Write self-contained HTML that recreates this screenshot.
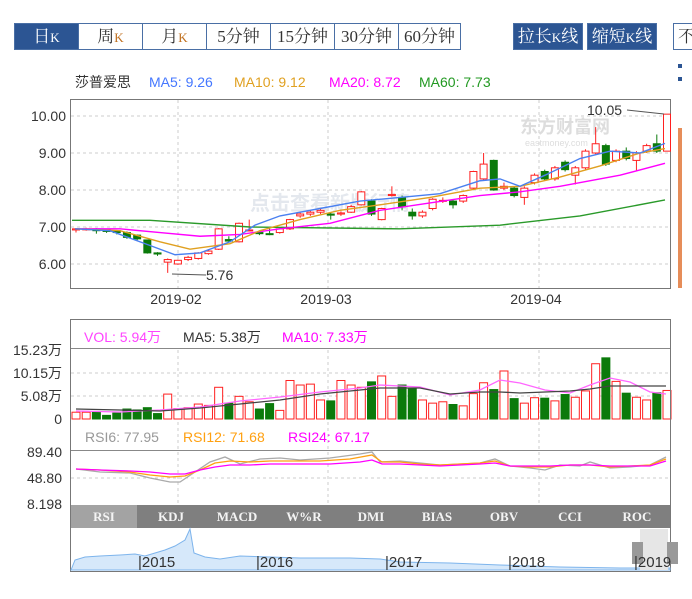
<!DOCTYPE html>
<html><head><meta charset="utf-8">
<style>
body{margin:0;width:692px;height:599px;background:#fff;overflow:hidden;position:relative;font-family:"Liberation Sans","Noto Sans CJK SC",sans-serif}
.btn{position:absolute;top:23px;height:27px;border:1px solid #4a6fa5;box-sizing:border-box;background:#fff;color:#333;font-size:17px;line-height:25px;text-align:center;font-family:"Liberation Serif","Noto Serif CJK SC",serif}
.btn.on{background:#2c5593;color:#fff}
.k{font-size:13px;color:#c07020}
.on .k{color:#fff}
svg{position:absolute;left:0;top:0}
</style></head><body>
<div class="btn on" style="left:14px;width:65px">日<span class="k">K</span></div>
<div class="btn" style="left:78px;width:65px">周<span class="k">K</span></div>
<div class="btn" style="left:142px;width:65px">月<span class="k">K</span></div>
<div class="btn" style="left:206px;width:65px">5分钟</div>
<div class="btn" style="left:270px;width:65px">15分钟</div>
<div class="btn" style="left:334px;width:65px">30分钟</div>
<div class="btn" style="left:398px;width:63px">60分钟</div>
<div class="btn on" style="left:513px;width:70px">拉长<span class="k">K</span>线</div>
<div class="btn on" style="left:587px;width:70px">缩短<span class="k">K</span>线</div>
<div class="btn" style="left:673px;width:40px;text-align:left;padding-left:4px">不</div>
<svg id="s" width="692" height="599" font-family="Liberation Sans, Noto Sans CJK SC, sans-serif">
<rect x="678" y="64" width="4" height="4" fill="#2c5593"/><rect x="678" y="77" width="4" height="4" fill="#2c5593"/>
<rect x="678" y="128" width="4" height="160" fill="#e07030" opacity="0.8"/>
<text x="75" y="87" font-size="14" fill="#333">莎普爱思</text>
<text x="149" y="87" font-size="14" fill="#4477ff">MA5: 9.26</text>
<text x="234" y="87" font-size="14" fill="#e0a020">MA10: 9.12</text>
<text x="329" y="87" font-size="14" fill="#ff00ff">MA20: 8.72</text>
<text x="419" y="87" font-size="14" fill="#229922">MA60: 7.73</text>
<rect x="70.5" y="99.5" width="600" height="189" fill="none" stroke="#777"/>
<g stroke="#ccc" stroke-dasharray="3,3">
<line x1="71" x2="670" y1="116" y2="116"/><line x1="71" x2="670" y1="153" y2="153"/><line x1="71" x2="670" y1="190" y2="190"/><line x1="71" x2="670" y1="227" y2="227"/><line x1="71" x2="670" y1="264" y2="264"/>
<line x1="178" x2="178" y1="100" y2="288"/><line x1="328" x2="328" y1="100" y2="288"/><line x1="539" x2="539" y1="100" y2="288"/>
<line x1="178" x2="178" y1="350" y2="504"/><line x1="328" x2="328" y1="350" y2="504"/><line x1="539" x2="539" y1="350" y2="504"/>
<line x1="71" x2="670" y1="373" y2="373"/><line x1="71" x2="670" y1="396" y2="396"/><line x1="71" x2="670" y1="478" y2="478"/>
</g>
<g font-size="14" fill="#333" text-anchor="end">
<text x="66" y="121">10.00</text><text x="66" y="158">9.00</text><text x="66" y="195">8.00</text><text x="66" y="232">7.00</text><text x="66" y="269">6.00</text>
</g>
<g font-size="14" fill="#333" text-anchor="middle"><text x="176" y="304">2019-02</text><text x="326" y="304">2019-03</text><text x="536" y="304">2019-04</text></g>
<text x="520" y="133" font-size="18" fill="#ddd" font-weight="bold">东方财富网</text>
<text x="525" y="146" font-size="9" fill="#ddd">eastmoney.com</text>
<text x="250" y="210" font-size="20" fill="#e4e8ee" font-weight="bold">点击查看新版行情</text>
<g id="cd"></g>
<text x="587" y="115" font-size="14" fill="#333">10.05</text>
<line x1="627" y1="110" x2="664" y2="114" stroke="#555"/>
<text x="206" y="280" font-size="14" fill="#333">5.76</text>
<line x1="172" y1="274" x2="206" y2="275" stroke="#555"/>
<rect x="70.5" y="319.5" width="600" height="252" fill="none" stroke="#777"/>
<line x1="71" x2="670" y1="348.5" y2="348.5" stroke="#888"/>
<line x1="71" x2="670" y1="450.5" y2="450.5" stroke="#888"/>
<text x="84" y="342" font-size="14" fill="#ff44ff">VOL: 5.94万</text>
<text x="183" y="342" font-size="14" fill="#333">MA5: 5.38万</text>
<text x="282" y="342" font-size="14" fill="#ff00ff">MA10: 7.33万</text>
<g font-size="14" fill="#333" text-anchor="end">
<text x="62" y="355">15.23万</text><text x="62" y="378">10.15万</text><text x="62" y="401">5.08万</text><text x="62" y="424">0</text>
<text x="62" y="457">89.40</text><text x="62" y="483">48.80</text><text x="62" y="509">8.198</text>
</g>
<text x="85" y="442" font-size="14" fill="#999">RSI6: 77.95</text>
<text x="183" y="442" font-size="14" fill="#ffa010">RSI12: 71.68</text>
<text x="288" y="442" font-size="14" fill="#ff00ff">RSI24: 67.17</text>
<polyline fill="none" stroke="#aaa" stroke-width="1.3" points="76,469 100,472 130,473 150,478 170,482 180,482 195,472 210,462 225,457 240,464 260,459 280,458 300,460 330,458 360,454 372,452 380,462 400,461 420,463 440,465 460,464 480,463 495,459 510,466 530,468 545,470 560,465 580,466 590,462 610,468 630,467 650,465 666,457"/>
<polyline fill="none" stroke="#ffa010" stroke-width="1.3" points="76,469 100,470 130,472 150,475 170,477 185,476 200,470 215,463 230,461 250,462 270,461 290,461 320,461 350,459 372,455 382,462 400,462 420,464 440,465 460,464 480,463 495,461 510,466 530,467 550,467 570,465 590,465 610,467 630,466 650,465 666,459"/>
<polyline fill="none" stroke="#ff00ff" stroke-width="1.3" points="76,469 100,470 130,471 150,472 170,474 185,474 200,470 215,467 230,465 250,465 270,464 300,464 330,464 360,462 372,460 382,464 400,464 420,465 440,466 460,465 480,464 495,463 510,466 530,466 550,466 570,465 590,465 610,466 630,466 650,466 666,461"/>
<rect x="71" y="505" width="599" height="23" fill="#7f7f7f"/>
<rect x="71" y="505" width="66" height="23" fill="#a3a3a3"/>
<g font-size="13" fill="#f4f4f4" text-anchor="middle" font-family="Liberation Serif, serif" font-weight="bold"><text x="104" y="521">RSI</text><text x="171" y="521">KDJ</text><text x="237" y="521">MACD</text><text x="304" y="521">W%R</text><text x="371" y="521">DMI</text><text x="437" y="521">BIAS</text><text x="504" y="521">OBV</text><text x="570" y="521">CCI</text><text x="637" y="521">ROC</text></g>
<path d="M71,570 L75,560 L85,557 L100,556 L120,555 L135,554 L145,556 L155,553 L165,550 L175,546 L185,540 L190,529 L194,553 L205,557 L220,559 L240,556 L270,557 L300,558 L350,558 L380,559 L400,562 L450,563 L500,565 L560,567 L620,568 L670,568 L670,570 Z" fill="#d6e8fa" stroke="#7db4ec" stroke-width="1"/>
<rect x="640" y="529" width="28" height="41" fill="#e6e6e6"/>
<rect x="632" y="542" width="11" height="22" fill="#999"/><rect x="667" y="542" width="11" height="22" fill="#999"/>
<g font-size="15" fill="#333"><text x="138" y="567">|2015</text><text x="256" y="567">|2016</text><text x="385" y="567">|2017</text><text x="508" y="567">|2018</text><text x="634" y="567">|2019</text></g>
</svg>
<script>
var D=[[6.92,6.95,6.97,6.85],[6.93,6.95,6.98,6.9],[6.95,6.9,6.97,6.82],[6.92,6.88,6.95,6.84],[6.9,6.85,6.92,6.8],[6.85,6.72,6.88,6.68],[6.78,6.68,6.8,6.62],[6.65,6.3,6.66,6.28],[6.3,6.27,6.32,6.22],[6.05,6.12,6.15,5.76],[6.0,6.1,6.12,5.98],[6.12,6.18,6.22,6.08],[6.15,6.3,6.32,6.12],[6.28,6.35,6.4,6.25],[6.4,6.95,6.97,6.38],[6.66,6.62,6.75,6.6],[6.6,7.1,7.12,6.58],[6.9,6.92,7.2,6.88],[6.85,6.82,6.9,6.78],[6.82,6.8,7.0,6.78],[6.85,6.95,6.98,6.82],[6.95,7.2,7.22,6.92],[7.3,7.35,7.4,7.25],[7.35,7.4,7.45,7.3],[7.4,7.45,7.5,7.35],[7.35,7.32,7.4,7.2],[7.35,7.38,7.42,7.3],[7.4,7.55,7.6,7.38],[7.6,7.95,7.97,7.58],[7.7,7.35,7.75,7.3],[7.2,7.5,7.52,7.18],[7.85,7.88,8.1,7.82],[7.8,7.55,7.85,7.45],[7.4,7.3,7.5,7.2],[7.3,7.4,7.45,7.25],[7.5,7.75,7.78,7.45],[7.7,7.72,7.8,7.65],[7.7,7.6,7.75,7.5],[7.7,7.85,7.88,7.65],[8.05,8.5,8.52,8.0],[8.3,8.7,9.0,8.25],[8.8,8.0,8.82,7.98],[8.05,8.1,8.2,8.0],[8.05,7.85,8.1,7.8],[7.8,8.05,8.1,7.6],[8.2,8.4,8.45,8.15],[8.5,8.3,8.55,8.25],[8.3,8.6,8.65,8.25],[8.75,8.55,8.8,8.5],[8.4,8.6,8.65,8.15],[8.6,9.05,9.1,8.55],[9.0,9.25,9.7,8.95],[9.2,8.7,9.25,8.65],[8.8,9.05,9.1,8.75],[9.05,8.85,9.15,8.8],[8.8,9.0,9.05,8.5],[9.05,9.2,9.25,9.0],[9.25,9.05,9.5,9.0],[9.05,10.05,10.05,9.05]];
var V=[1.5,1.5,1.5,0.8,1.3,2.2,2.0,2.5,1.2,5.5,2.3,2.5,3.3,3.0,7.0,3.5,5.0,3.8,2.2,3.4,1.9,8.5,7.5,7.7,4.2,4.0,8.5,7.5,7.0,8.2,9.5,5.0,7.5,6.8,4.2,3.5,3.8,3.2,2.9,5.6,8.0,6.5,10.6,4.5,3.5,4.7,4.6,4.0,5.4,4.8,6.2,12.2,13.5,8.3,5.7,4.8,4.2,5.8,6.3,6.0];
function y(p){return 116+(10-p)*37}
var g=document.getElementById('cd'),h='';
var W=(667-76)/58;
D.forEach(function(d,i){var x=76+i*W,up=d[1]>=d[0],c=up?'#ff2020':'#0b7a0b';
var t=y(Math.max(d[0],d[1])),b=y(Math.min(d[0],d[1]));if(b-t<1)b=t+1;
h+='<line x1="'+x+'" x2="'+x+'" y1="'+y(d[2])+'" y2="'+y(d[3])+'" stroke="'+c+'"/>';
h+='<rect x="'+(x-3.5)+'" y="'+t+'" width="7" height="'+(b-t)+'" fill="'+(up?'#fff':c)+'" stroke="'+c+'"/>';
var v=V[i]*4.53;h+='<rect x="'+(x-4)+'" y="'+(419-v)+'" width="8" height="'+v+'" fill="'+(up?'#fff':c)+'" stroke="'+c+'"/>';});
function pl(pts,col){return '<polyline fill="none" stroke="'+col+'" stroke-width="1.4" points="'+pts.map(function(p){return p[0]+','+y(p[1])}).join(' ')+'"/>';}
h+=pl([[72,7.18],[150,7.18],[250,7.0],[400,6.95],[500,7.05],[580,7.3],[665,7.73]],'#2a9a2a');
h+=pl([[75,6.95],[120,6.95],[160,6.85],[200,6.75],[240,6.8],[280,6.95],[330,7.1],[380,7.45],[430,7.65],[480,7.85],[520,7.95],[560,8.1],[620,8.4],[665,8.72]],'#ff00ff');
h+=pl([[75,6.95],[120,6.9],[160,6.6],[190,6.4],[230,6.55],[260,6.9],[300,7.2],[340,7.45],[380,7.6],[430,7.8],[480,8.05],[520,8.1],[560,8.35],[600,8.65],[640,9.0],[665,9.12]],'#e0a020');
h+=pl([[75,6.95],[110,6.9],[150,6.5],[175,6.25],[200,6.3],[230,6.6],[255,7.05],[280,7.3],[320,7.5],[360,7.7],[400,7.8],[440,7.9],[480,8.25],[500,8.3],[520,8.1],[545,8.4],[580,8.85],[610,9.05],[640,9.0],[665,9.26]],'#4a80f0');
h+='<polyline fill="none" stroke="#ff66ff" stroke-width="1.3" points="76,411 120,412 160,410 200,407 240,401 280,397 320,392 360,388 380,385 420,387 450,395 480,390 500,380 520,383 545,390 570,393 590,385 610,378 630,382 650,392 666,394"/>';
h+='<polyline fill="none" stroke="#444" stroke-width="1.3" points="76,409 120,410 160,411 200,408 240,404 280,400 320,394 360,390 380,388 420,388 450,394 480,392 500,392 520,393 545,392 570,391 590,389 610,386 630,386 650,386 666,386"/>';
g.innerHTML=h;
</script>
</body></html>
